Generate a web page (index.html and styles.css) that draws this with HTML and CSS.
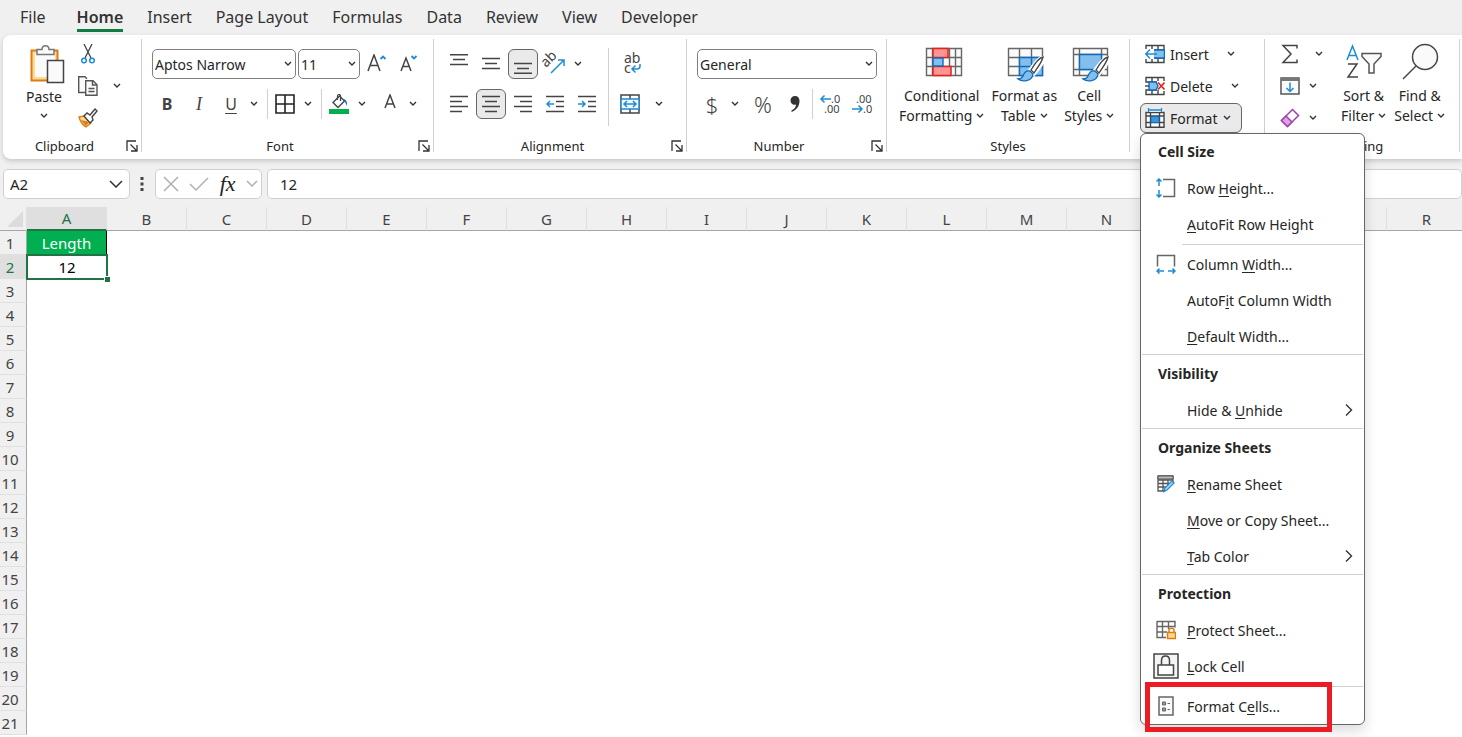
FILE: index.html
```html
<!DOCTYPE html>
<html lang="en">
<head>
  <meta charset="UTF-8">
  <title>Spreadsheet - Format Cells</title>
  <meta name="viewport" content="width=device-width, initial-scale=1.0">
  <link rel="stylesheet" href="styles.css">
</head>
<body>
  <svg class="symbols" aria-hidden="true">
    <symbol id="chev" viewBox="0 0 8 6"><path d="M1 1l3 3 3-3" fill="none" stroke="#333" stroke-width="1.4"/></symbol>
    <symbol id="launch" viewBox="0 0 12 12"><path d="M1 11V1h9M4.500 4.500l6 6M11 5v6H5" fill="none" stroke="#333" stroke-width="1.3"/></symbol>
    <symbol id="brush" viewBox="0 0 30 26">
      <path d="M29 1c-4 1-8 6-13 13l3 3C24 11 28 6 29 1z" fill="#fff" stroke="#fff" stroke-width="5"/>
      <path d="M28 1c-4 1-8 6-12 13l3 3C23 11 27 6 28 1z" fill="#fff" stroke="#444" stroke-width="1.300"/>
      <path d="M15 15c-4-1-6 2-7 5-1 2-3 3-5 3 4 3 14 3 15-5z" fill="#83beec" stroke="#0f6cbd" stroke-width="1.300"/>
    </symbol>
  </svg>

  <nav class="tabs">
    <a href="#">File</a>
    <a href="#" class="active">Home</a>
    <a href="#">Insert</a>
    <a href="#">Page Layout</a>
    <a href="#">Formulas</a>
    <a href="#">Data</a>
    <a href="#">Review</a>
    <a href="#">View</a>
    <a href="#">Developer</a>
  </nav>

  <div class="ribbon">
    <section class="group clipboard">
      <div class="group-body">
        <button class="big">
          <svg width="36" height="40" viewBox="0 0 36 40">
            <path d="M2.500 6.500h26v30h-26z" fill="#fbdc95" stroke="#e07b13" stroke-width="2"/>
            <path d="M6 9h20v24H6z" fill="#fafafa"/>
            <path d="M8 10.500V5.500h5c0-5 7-5 7 0h5v5z" fill="#fafafa" stroke="#777" stroke-width="1.500"/>
            <path d="M18.500 16.500h16v22h-16z" fill="#fafafa" stroke="#444" stroke-width="1.500"/>
          </svg>
          <span>Paste</span>
          <svg class="chev"><use href="#chev"/></svg>
        </button>
        <div class="stack">
          <div class="row">
            <button class="btn" aria-label="Cut">
              <svg width="14" height="20" viewBox="0 0 14 20"><path d="M3 0l7 14M11 0L4 14" fill="none" stroke="#444" stroke-width="1.300"/><circle cx="3" cy="16.500" r="2.300" fill="none" stroke="#1e8bd4" stroke-width="1.500"/><circle cx="11" cy="16.500" r="2.300" fill="none" stroke="#1e8bd4" stroke-width="1.500"/></svg>
            </button>
          </div>
          <div class="row">
            <button class="btn" aria-label="Copy">
              <svg width="20" height="20" viewBox="0 0 20 20" fill="#fafafa" stroke="#555" stroke-width="1.400"><path d="M7 16.500H.700V.700H7l2 2"/><path d="M7.700 4.700H15l4 4v10.500H7.700z"/><path d="M14.500 5v4H19M10.500 12.500h6M10.500 15.500h6" fill="none"/></svg>
            </button>
            <button class="arrow arrow-wide" aria-label="Copy options"><svg class="chev"><use href="#chev"/></svg></button>
          </div>
          <div class="row">
            <button class="btn" aria-label="Format Painter">
              <svg width="20" height="20" viewBox="0 0 20 20"><path d="M1 9l5-1 7 7-5 4c-3-2-6-6-7-10z" fill="#fbdc95" stroke="#e07b13" stroke-width="1.400"/><path d="M3 12l8 2-3 4z" fill="#e07b13"/><path d="M6 8l3-3 3 2 5-6 2 2-5 6 1 3-3 3z" fill="#fff" stroke="#444" stroke-width="1.400"/></svg>
            </button>
          </div>
        </div>
      </div>
      <div class="caption"><span>Clipboard</span><button aria-label="Clipboard settings"><svg width="12" height="12"><use href="#launch"/></svg></button></div>
    </section>

    <section class="group font">
      <div class="group-body rows">
        <div class="row">
          <div class="combo combo-font">
            <select aria-label="Font"><option>Aptos Narrow</option></select>
            <svg class="chev"><use href="#chev"/></svg>
          </div>
          <div class="combo combo-size">
            <select aria-label="Font size"><option>11</option></select>
            <svg class="chev"><use href="#chev"/></svg>
          </div>
          <button class="btn" aria-label="Increase font size">
            <svg width="20" height="20" viewBox="0 0 20 20" fill="none" stroke-width="1.500"><path d="M1 17L7 1l6 16M3 11.500h8" stroke="#444"/><path d="M13.500 5L16 2.500 18.500 5" stroke="#1e8bd4" stroke-width="1.800"/></svg>
          </button>
          <button class="btn" aria-label="Decrease font size">
            <svg width="18" height="20" viewBox="0 0 18 20" fill="none" stroke-width="1.500"><path d="M1 17L6 4l5 13M3 12.500h6" stroke="#444"/><path d="M11.500 2L14 4.500 16.500 2" stroke="#1e8bd4" stroke-width="1.800"/></svg>
          </button>
        </div>
        <div class="row">
          <button class="btn letter bold">B</button>
          <button class="btn letter italic">I</button>
          <div class="split">
            <button class="btn letter underline">U</button>
            <button class="arrow" aria-label="Underline options"><svg class="chev"><use href="#chev"/></svg></button>
          </div>
          <span class="sep"></span>
          <div class="split">
            <button class="btn" aria-label="Borders"><svg width="20" height="20" viewBox="0 0 20 20"><path d="M1 1h18v18H1zM10 1v18M1 10h18" fill="none" stroke="#222" stroke-width="1.600"/></svg></button>
            <button class="arrow" aria-label="Border options"><svg class="chev"><use href="#chev"/></svg></button>
          </div>
          <span class="sep"></span>
          <div class="split">
            <button class="btn" aria-label="Fill color">
              <svg width="20" height="20" viewBox="0 0 20 20"><path d="M0 15h20v5H0z" fill="#00b050"/><path d="M4 8.500L10.500 2l5 5-6.500 6.500z" fill="#fff" stroke="#444" stroke-width="1.400"/><path d="M8.500 6V2c0-2 3-2 3 0v5" fill="none" stroke="#444" stroke-width="1.200"/><path d="M14 5c3 0 4.500 3 4 7-1-2-1.500-4-3-5z" fill="#0f6cbd"/></svg>
            </button>
            <button class="arrow" aria-label="Fill options"><svg class="chev"><use href="#chev"/></svg></button>
          </div>
          <div class="split">
            <button class="btn" aria-label="Font color"><svg width="14" height="20" viewBox="0 0 14 20"><path d="M2 14L7 1l5 13M3.500 10h7" fill="none" stroke="#444" stroke-width="1.500"/></svg></button>
            <button class="arrow" aria-label="Font color options"><svg class="chev"><use href="#chev"/></svg></button>
          </div>
        </div>
      </div>
      <div class="caption"><span>Font</span><button aria-label="Font settings"><svg width="12" height="12"><use href="#launch"/></svg></button></div>
    </section>

    <section class="group alignment">
      <div class="group-body side">
        <div class="rows">
          <div class="row">
            <button class="btn" aria-label="Top align"><svg class="lines" viewBox="0 0 18 20"><path d="M0 .700h18M3 5.500h12M0 10.500h18"/></svg></button>
            <button class="btn" aria-label="Middle align"><svg class="lines" viewBox="0 0 18 20"><path d="M0 4.500h18M3 9.500h12M0 14.500h18"/></svg></button>
            <button class="btn pressed" aria-label="Bottom align"><svg class="lines" viewBox="0 0 18 20"><path d="M0 9.500h18M3 14.500h12M0 19.300h18"/></svg></button>
            <div class="split">
              <button class="btn" aria-label="Orientation">
                <svg width="26" height="26" viewBox="0 0 26 26"><text x="4" y="17" transform="rotate(-45 4 17)" class="glyph-text">ab</text><path d="M9 22L22 9M16 9h6v6" fill="none" stroke="#1e8bd4" stroke-width="1.500"/></svg>
              </button>
              <button class="arrow" aria-label="Orientation options"><svg class="chev"><use href="#chev"/></svg></button>
            </div>
          </div>
          <div class="row">
            <button class="btn" aria-label="Align left"><svg class="lines" viewBox="0 0 18 20"><path d="M0 2.500h18M0 7.500h12M0 12.500h18M0 17.500h12"/></svg></button>
            <button class="btn pressed" aria-label="Center"><svg class="lines" viewBox="0 0 18 20"><path d="M0 2.500h18M3 7.500h12M0 12.500h18M3 17.500h12"/></svg></button>
            <button class="btn" aria-label="Align right"><svg class="lines" viewBox="0 0 18 20"><path d="M0 2.500h18M6 7.500h12M0 12.500h18M6 17.500h12"/></svg></button>
            <button class="btn" aria-label="Decrease indent"><svg class="lines" viewBox="0 0 18 20"><path d="M0 2.500h18M10 7.500h8M10 12.500h8M0 17.500h18"/><path d="M8 10H1M4 7l-3 3 3 3" class="blue"/></svg></button>
            <button class="btn" aria-label="Increase indent"><svg class="lines" viewBox="0 0 18 20"><path d="M0 2.500h18M10 7.500h8M10 12.500h8M0 17.500h18"/><path d="M0 10h7M4 7l3 3-3 3" class="blue"/></svg></button>
          </div>
        </div>
        <span class="sep tall"></span>
        <div class="rows">
          <div class="row">
            <button class="btn" aria-label="Wrap text">
              <svg width="24" height="28" viewBox="0 0 24 28"><text x="6" y="13" class="glyph-text">ab</text><text x="6" y="23" class="glyph-text">c</text><path d="M22 14v2c0 2-1 3-3 3h-5M17.500 15.500L14 19l3.500 3.500" fill="none" stroke="#1e8bd4" stroke-width="1.500"/></svg>
            </button>
          </div>
          <div class="row">
            <div class="split">
              <button class="btn" aria-label="Merge and center">
                <svg width="20" height="20" viewBox="0 0 20 20" fill="none" stroke-width="1.500"><path d="M1 1h18v18H1zM10 1v4M10 15v4" stroke="#444"/><path d="M1 5h18v10H1z" fill="#f3f9fe" stroke="#1e8bd4"/><path d="M4 10h12M7 7l-3 3 3 3M13 7l3 3-3 3" stroke="#1e8bd4"/></svg>
              </button>
              <button class="arrow arrow-wide" aria-label="Merge options"><svg class="chev"><use href="#chev"/></svg></button>
            </div>
          </div>
        </div>
      </div>
      <div class="caption"><span>Alignment</span><button aria-label="Alignment settings"><svg width="12" height="12"><use href="#launch"/></svg></button></div>
    </section>

    <section class="group number">
      <div class="group-body rows">
        <div class="row">
          <div class="combo combo-number">
            <select aria-label="Number format"><option>General</option></select>
            <svg class="chev"><use href="#chev"/></svg>
          </div>
        </div>
        <div class="row">
          <div class="split">
            <button class="btn symbol">$</button>
            <button class="arrow" aria-label="Currency options"><svg class="chev"><use href="#chev"/></svg></button>
          </div>
          <button class="btn symbol">%</button>
          <button class="btn" aria-label="Comma style"><svg width="12" height="18" viewBox="0 0 12 18"><path d="M6 1c3 0 4.500 2 4.500 5 0 5-3 9-8 11v-1.500c3-1.500 4.500-3.500 4.500-6C4 10.500 1.500 8.500 1.500 5.500 1.500 3 3.500 1 6 1z" fill="#333"/></svg></button>
          <span class="sep"></span>
          <button class="btn" aria-label="Increase decimal"><svg width="22" height="26" viewBox="0 0 22 26"><text x="12" y="12" class="digits">.0</text><text x="5" y="22" class="digits">.00</text><path d="M12 8H2M5.500 4.500L2 8l3.500 3.500" fill="none" stroke="#1e8bd4" stroke-width="1.500"/></svg></button>
          <button class="btn" aria-label="Decrease decimal"><svg width="22" height="26" viewBox="0 0 22 26"><text x="5" y="12" class="digits">.00</text><text x="12" y="22" class="digits">.0</text><path d="M1 18h10M7.500 14.500L11 18l-3.500 3.500" fill="none" stroke="#1e8bd4" stroke-width="1.500"/></svg></button>
        </div>
      </div>
      <div class="caption"><span>Number</span><button aria-label="Number settings"><svg width="12" height="12"><use href="#launch"/></svg></button></div>
    </section>

    <section class="group styles">
      <div class="group-body">
        <button class="big">
          <svg width="38" height="40" viewBox="0 0 38 40"><path d="M1.500 5.500h35v27h-35zM1.500 14.500h35M1.500 23.500h35M7.500 5v28M24.500 5v28M30.500 5v28" fill="#fafafa" stroke="#666" stroke-width="1.400"/><path d="M8 5.500h15v9H8zM8 23.500h18v9H8z" fill="#ff9494" stroke="#e2231a" stroke-width="1.500"/><path d="M8 15h10v8H8z" fill="#83beec" stroke="#0f6cbd" stroke-width="1.400"/></svg>
          <span>Conditional</span>
          <span>Formatting <svg class="chev"><use href="#chev"/></svg></span>
        </button>
        <button class="big">
          <svg width="38" height="40" viewBox="0 0 38 40"><path d="M1.500 5.500h34v27h-34zM1.500 14.500h34M1.500 23.500h34M12.500 5v28M24.500 5v28" fill="#fafafa" stroke="#666" stroke-width="1.400"/><path d="M12.500 14.500h23v18h-23zM24.500 14v19M12 23.500h23" fill="#83beec" stroke="#0f6cbd" stroke-width="1.400"/><use href="#brush" x="8" y="13" width="30" height="26"/></svg>
          <span>Format as</span>
          <span>Table <svg class="chev"><use href="#chev"/></svg></span>
        </button>
        <button class="big">
          <svg width="38" height="40" viewBox="0 0 38 40"><path d="M1.500 5.500h34v27h-34zM1.500 11.500h34M1.500 26.500h34M7.500 5v28M29.500 5v28" fill="#fafafa" stroke="#666" stroke-width="1.400"/><path d="M7.500 11.500h22v15h-22z" fill="#83beec" stroke="#0f6cbd" stroke-width="1.400"/><use href="#brush" x="8" y="13" width="30" height="26"/></svg>
          <span>Cell</span>
          <span>Styles <svg class="chev"><use href="#chev"/></svg></span>
        </button>
      </div>
      <div class="caption"><span>Styles</span></div>
    </section>

    <section class="group cells">
      <div class="group-body">
        <div class="stack">
          <div class="row">
            <button class="text-btn">
              <svg width="20" height="20" viewBox="0 0 20 20"><path d="M1 1.500h18v17H1zM7 1v5M13 1v5M7 14v5M13 14v5M1 6h18M1 14h18" fill="#fff" stroke="#444" stroke-width="1.400"/><path d="M8 6h11.500v8H8z" fill="#83beec" stroke="#0f6cbd" stroke-width="1.400"/><path d="M0 5h9v10H0z" fill="#fff"/><path d="M12 10H1M5 5.500L.800 10 5 14.500" fill="none" stroke="#1e8bd4" stroke-width="1.500"/></svg>
              Insert
            </button>
            <button class="arrow" aria-label="Insert options"><svg class="chev"><use href="#chev"/></svg></button>
          </div>
          <div class="row">
            <button class="text-btn">
              <svg width="20" height="20" viewBox="0 0 20 20"><path d="M19 5V1.500H1V6h11M12 14H1v4.500h18V15M7 1v5M13 1v4M7 14v5M13 14v5" fill="none" stroke="#444" stroke-width="1.400"/><path d="M4 6h7l2 4-2 4H4z" fill="#83beec" stroke="#0f6cbd" stroke-width="1.400"/><path d="M0 10h4" stroke="#444" stroke-width="1.400"/><path d="M13 6.500l6.500 7M19.500 6.500l-6.500 7" stroke="#e2231a" stroke-width="1.600"/></svg>
              Delete
            </button>
            <button class="arrow" aria-label="Delete options"><svg class="chev"><use href="#chev"/></svg></button>
          </div>
          <div class="row menu-anchor">
            <button class="text-btn pressed" aria-expanded="true">
              <svg width="20" height="20" viewBox="0 0 20 20"><path d="M1 4.500h18v14.800H1zM5.500 4v15M14.500 4v15M1 8h18M1 14.500h18" fill="#fff" stroke="#444" stroke-width="1.400"/><path d="M6 8.500h8v6H6z" fill="#3a96dd" stroke="#0f6cbd"/><path d="M2 0h16v4H2z" fill="#eaeaea"/><path d="M3.500 2h13M3.500 0v4M16.500 0v4" stroke="#1e8bd4" stroke-width="1.300"/></svg>
              Format <svg class="chev"><use href="#chev"/></svg>
            </button>

            <div class="menu" role="menu">
              <h3>Cell Size</h3>
              <button role="menuitem"><span class="menu-icon"><svg width="20" height="20" viewBox="0 0 20 20" fill="none" stroke-width="1.500"><path d="M7 1.500h11.500v17H7" stroke="#666"/><path d="M3 1v7M3 12v7M.500 3.500L3 1l2.500 2.500M.500 16.500L3 19l2.500-2.500" stroke="#1e8bd4"/></svg></span><span>Row <u>H</u>eight...</span></button>
              <button role="menuitem"><span class="menu-icon"></span><span><u>A</u>utoFit Row Height</span></button>
              <hr class="indent">
              <button role="menuitem"><span class="menu-icon"><svg width="20" height="20" viewBox="0 0 20 20" fill="none" stroke-width="1.500"><path d="M1.500 12.500V1.500h17v11" stroke="#666"/><path d="M1 17h7M12 17h7M3.500 14.500L1 17l2.500 2.500M16.500 14.500L19 17l-2.500 2.500" stroke="#1e8bd4"/></svg></span><span>Column <u>W</u>idth...</span></button>
              <button role="menuitem"><span class="menu-icon"></span><span>AutoF<u>i</u>t Column Width</span></button>
              <button role="menuitem"><span class="menu-icon"></span><span><u>D</u>efault Width...</span></button>
              <hr>
              <h3>Visibility</h3>
              <button role="menuitem"><span class="menu-icon"></span><span>Hide &amp; <u>U</u>nhide</span><svg class="more" viewBox="0 0 8 12"><path d="M1 .500L6.500 6 1 11.500"/></svg></button>
              <hr>
              <h3>Organize Sheets</h3>
              <button role="menuitem"><span class="menu-icon"><svg width="18" height="18" viewBox="0 0 18 18"><path d="M8 16H1V1h15v6M1 5h15M1 8.500h12M1 12h9M6 5v11M11 5v6" fill="none" stroke="#555" stroke-width="1.300"/><path d="M1 1h15v3H1z" fill="#bbb" stroke="#555"/><path d="M7 16.500l1-3.500 7-7 2 2-7 7z" fill="#b9dcf5" stroke="#1e8bd4" stroke-width="1.300"/></svg></span><span><u>R</u>ename Sheet</span></button>
              <button role="menuitem"><span class="menu-icon"></span><span><u>M</u>ove or Copy Sheet...</span></button>
              <button role="menuitem"><span class="menu-icon"></span><span><u>T</u>ab Color</span><svg class="more" viewBox="0 0 8 12"><path d="M1 .500L6.500 6 1 11.500"/></svg></button>
              <hr>
              <h3>Protection</h3>
              <button role="menuitem"><span class="menu-icon"><svg width="20" height="20" viewBox="0 0 20 20"><path d="M1 1.500h18v6M1 1v16.500h9M1 6.500h18M1 12h10M6.500 1v16M12.500 1v8" fill="none" stroke="#666" stroke-width="1.400"/><path d="M13 12.500V10c0-2.500 5-2.500 5 0v2.500" fill="#fff" stroke="#e07b13" stroke-width="1.500"/><path d="M11.500 12.500h8v6h-8z" fill="#fbdc95" stroke="#e07b13" stroke-width="1.500"/></svg></span><span><u>P</u>rotect Sheet...</span></button>
              <button role="menuitem"><span class="menu-icon"><svg width="26" height="26" viewBox="0 0 26 26" stroke="#444" stroke-width="1.500"><path d="M1 1h24v24H1z" fill="#f4f4f4"/><path d="M8.500 12V7.500c0-6 8-6 8 0V12" fill="none"/><path d="M5 12h15.500v10H5z" fill="#fff"/></svg></span><span><u>L</u>ock Cell</span></button>
              <hr class="indent">
              <button role="menuitem" class="highlighted"><span class="menu-icon"><svg width="16" height="20" viewBox="0 0 16 20"><path d="M1 1h14v18H1z" fill="#fafafa" stroke="#666" stroke-width="1.500"/><path d="M4.500 6h3v3h-3zM4.500 12h3v3h-3z" fill="#999" stroke="#666"/><path d="M9.500 7.500H12M9.500 13.500H12" stroke="#666"/></svg></span><span>Format C<u>e</u>lls...</span></button>
            </div>
          </div>
        </div>
      </div>
      <div class="caption"></div>
    </section>

    <section class="group editing">
      <div class="group-body">
        <div class="stack">
          <div class="row">
            <button class="btn" aria-label="AutoSum"><svg width="18" height="20" viewBox="0 0 18 20"><path d="M16 4.500V1.500H2l8 8.500-8 8.500h14v-3" fill="none" stroke="#444" stroke-width="1.500"/></svg></button>
            <button class="arrow arrow-wide" aria-label="AutoSum options"><svg class="chev"><use href="#chev"/></svg></button>
          </div>
          <div class="row">
            <button class="btn" aria-label="Fill"><svg width="20" height="18" viewBox="0 0 20 18"><path d="M1 1h18v16H1z" fill="#fafafa" stroke="#555" stroke-width="1.500"/><path d="M1 2.500h18" stroke="#777" stroke-width="3"/><path d="M10 5.500v9M6.500 11l3.500 3.500 3.500-3.500" fill="none" stroke="#1e8bd4" stroke-width="1.500"/></svg></button>
            <button class="arrow" aria-label="Fill options"><svg class="chev"><use href="#chev"/></svg></button>
          </div>
          <div class="row">
            <button class="btn" aria-label="Clear"><svg width="20" height="20" viewBox="0 0 20 20" stroke="#a33fb0" stroke-width="1.500"><path d="M1.500 12.500L12.500 1.500l6 6-11 11z" fill="#fff"/><path d="M1.500 12.500L6 8l6 6-4.500 4.500z" fill="#dfa0e6"/></svg></button>
            <button class="arrow" aria-label="Clear options"><svg class="chev"><use href="#chev"/></svg></button>
          </div>
        </div>
        <button class="big">
          <svg width="38" height="40" viewBox="0 0 38 40" fill="none" stroke-width="1.500"><path d="M2 17L7.500 3 13 17M4 12.500h7" stroke="#1e8bd4"/><path d="M3 21h9L3 34h10" stroke="#444"/><path d="M17 10.500h19v3l-7 7.500v9h-5v-9l-7-7.500z" fill="#fafafa" stroke="#555"/></svg>
          <span>Sort &amp;</span>
          <span>Filter <svg class="chev"><use href="#chev"/></svg></span>
        </button>
        <button class="big">
          <svg width="38" height="40" viewBox="0 0 38 40" stroke="#444" stroke-width="1.500"><circle cx="24" cy="14" r="12.500" fill="#fafafa"/><path d="M15 23L2 36"/></svg>
          <span>Find &amp;</span>
          <span>Select <svg class="chev"><use href="#chev"/></svg></span>
        </button>
      </div>
      <div class="caption"><span>Editing</span></div>
    </section>
  </div>

  <div class="formula-bar">
    <div class="box name-box">
      <input type="text" value="A2" aria-label="Name box">
      <button aria-label="Named ranges"><svg width="14" height="8" viewBox="0 0 14 8"><path d="M1 1l6 6 6-6"/></svg></button>
    </div>
    <svg class="dots" width="4" height="14" viewBox="0 0 4 14"><path d="M.500 0h3v3h-3zM.500 5.500h3v3h-3zM.500 11h3v3h-3z"/></svg>
    <div class="box fx-box">
      <button aria-label="Cancel"><svg width="16" height="16" viewBox="0 0 16 16"><path d="M1 1l14 14M15 1L1 15"/></svg></button>
      <button aria-label="Enter"><svg width="20" height="16" viewBox="0 0 20 16"><path d="M1 8l6 6L19 2"/></svg></button>
      <button class="fx">fx</button>
      <button aria-label="Function list"><svg width="12" height="8" viewBox="0 0 12 8"><path d="M1 1l5 5 5-5"/></svg></button>
    </div>
    <input class="box formula" type="text" value="12" aria-label="Formula bar">
  </div>

  <div class="sheet">
    <table id="grid">
      <thead><tr id="letters"><th class="corner"><svg width="16" height="16" viewBox="0 0 16 16"><path d="M16 0v16H0z" fill="#dcdcdc"/></svg></th></tr></thead>
      <tbody id="rows"></tbody>
    </table>
  </div>

  <script>
    const columns = "ABCDEFGHIJKLMNOPQR".split("");
    const cells = { A1: "Length", A2: "12" };
    const selected = "A2";

    columns.forEach(letter => {
      const th = document.createElement("th");
      th.textContent = letter;
      if (selected[0] === letter) th.className = "current";
      document.getElementById("letters").appendChild(th);
    });

    for (let r = 1; r <= 21; r++) {
      const tr = document.createElement("tr");
      const th = document.createElement("th");
      th.textContent = r;
      if (selected.slice(1) === String(r)) th.className = "current";
      tr.appendChild(th);
      columns.forEach(letter => {
        const td = document.createElement("td");
        td.textContent = cells[letter + r] || "";
        if (letter + r === "A1") td.className = "heading";
        if (letter + r === selected) td.className = "selected";
        tr.appendChild(td);
      });
      document.getElementById("rows").appendChild(tr);
    }
  </script>
</body>
</html>
```
FILE: styles.css
```css
*, *::after { box-sizing: border-box; }

body {
  margin: 0;
  height: 100vh;
  display: flex;
  flex-direction: column;
  overflow: hidden;
  background: #f0f0f0;
  color: #262626;
  font-family: "Noto Sans", "Open Sans", sans-serif;
  font-size: 14px;
}

button, input, select {
  font: inherit;
  color: inherit;
  background: none;
  border: 0;
  padding: 0;
  margin: 0;
}

svg { display: block; flex: none; }
.symbols { position: absolute; width: 0; height: 0; }

/* tabs */
.tabs {
  display: flex;
  gap: 24px;
  height: 35px;
  padding-left: 20px;
  font-size: 16px;
}

.tabs a {
  height: 32px;
  line-height: 34px;
  color: #333;
  text-decoration: none;
  white-space: nowrap;
}

.tabs a:first-child { margin-right: 7px; }

.tabs .active {
  font-weight: 600;
  border-bottom: 3px solid #107c41;
}

/* ribbon */
.ribbon {
  display: flex;
  flex: none;
  height: 124px;
  margin-left: 3px;
  padding: 4px 0 7px;
  background: #fff;
  border-radius: 8px 0 0 8px;
  box-shadow: 0 2px 5px rgba(0, 0, 0, 0.18);
}

.group {
  display: flex;
  flex-direction: column;
  flex: none;
  border-right: 1px solid #d0d0d0;
}

.clipboard { width: 139px; }
.font { width: 292px; }
.alignment { width: 253px; }
.number { width: 200px; }
.styles { width: 243px; }
.cells { width: 135px; }
.editing { width: 195px; }

.group-body {
  display: flex;
  flex: 1;
  padding-left: 10px;
}

.rows {
  display: flex;
  flex-direction: column;
  justify-content: flex-start;
  gap: 10px;
  padding-top: 10px;
}

.side { gap: 6px; }
.side .rows { flex: none; }

.stack {
  display: flex;
  flex-direction: column;
  gap: 2px;
}

.row { display: flex; align-items: center; height: 30px; gap: 2px; }
.stack .row { gap: 0; }
.split { display: flex; }
.split + * { margin-left: 3px; }

.sep { width: 1px; height: 30px; background: #d0d0d0; }
.sep.tall { height: 78px; margin-top: 9px; }

.caption {
  display: flex;
  align-items: center;
  height: 12px;
  font-size: 13px;
  line-height: 12px;
  text-align: center;
}

.caption span { flex: 1; }
.caption button { margin-right: 3px; }

.btn, .arrow {
  display: flex;
  align-items: center;
  justify-content: center;
  width: 30px;
  height: 30px;
}

.arrow { width: 16px; }
.arrow-wide { width: 28px; }
.chev { width: 8px; height: 6px; }

.pressed {
  background: #eaeaea;
  border: 1px solid #666;
  border-radius: 6px;
}

.letter { font-size: 16px; color: #444; }
.bold { font-weight: 700; }
.italic { font-family: "Liberation Serif", serif; font-style: italic; font-size: 18px; }
.underline { text-decoration: underline; text-underline-offset: 3px; }
.symbol { font-size: 22px; font-weight: 300; color: #444; }

.lines { width: 18px; height: 20px; fill: none; stroke: #444; stroke-width: 1.4px; }
.lines .blue { stroke: #1e8bd4; stroke-width: 1.5px; }
.glyph-text { font-size: 14px; fill: #444; }
.digits { font-size: 11px; fill: #444; }

.combo { display: flex; align-items: center; position: relative; height: 30px; }
.combo-font { width: 144px; }
.combo-size { width: 62px; }
.combo-number { width: 180px; }

.combo select {
  width: 100%;
  height: 100%;
  padding-left: 2px;
  appearance: none;
  border: 1px solid #808080;
  border-radius: 5px;
}

.combo .chev { position: absolute; right: 4px; pointer-events: none; }

.big {
  display: flex;
  flex-direction: column;
  align-items: center;
  height: 86px;
  padding-top: 4px;
  line-height: 20px;
  white-space: nowrap;
}

.big > svg:first-child { margin-bottom: 3px; }
.big span { display: flex; align-items: center; gap: 4px; }
.big > .chev { margin-top: 6px; }
.clipboard .big { width: 42px; margin: 0 8px 0 10px; padding-top: 5px; }
.clipboard .big > svg:first-child { margin-left: 5px; }
.styles .group-body { gap: 7px; padding-left: 12px; }
.styles .big > svg:first-child { margin-left: 4px; }
.editing .group-body { gap: 8px; }

.text-btn {
  display: flex;
  align-items: center;
  gap: 5px;
  height: 30px;
  padding: 0 14px 0 5px;
}

.text-btn.pressed { padding: 0 10px 0 4px; }

/* format menu */
.menu-anchor { position: relative; }

.menu {
  position: absolute;
  top: 30px;
  left: 0;
  z-index: 5;
  width: 225px;
  background: #fff;
  border: 1px solid #666;
  border-radius: 6px;
  box-shadow: 0 6px 14px rgba(0, 0, 0, 0.14);
}

.menu h3 {
  height: 36px;
  margin: 0;
  padding-left: 17px;
  font-size: 14px;
  font-weight: 700;
  line-height: 36px;
}

.menu button {
  display: flex;
  align-items: center;
  width: 100%;
  height: 36px;
  padding: 0 11px;
  text-align: left;
}

.menu-icon {
  display: flex;
  justify-content: center;
  width: 28px;
  margin-right: 7px;
}

.menu hr { height: 1px; margin: 0 1px 1px; border: 0; background: #d0d0d0; }
.menu .indent { margin: 2px 1px 1px 41px; }
.menu u { text-underline-offset: 2px; }
.more { width: 8px; height: 12px; margin-left: auto; fill: none; stroke: #333; stroke-width: 1.4px; }

.highlighted { position: relative; }

.highlighted::after {
  content: "";
  position: absolute;
  top: -6px;
  left: 4px;
  width: 187px;
  height: 50px;
  border: 5px solid #ed1c24;
}

/* formula bar */
.formula-bar {
  display: flex;
  align-items: center;
  flex: none;
  height: 48px;
  padding: 2px 0 0 3px;
}

.box {
  display: flex;
  align-items: center;
  height: 30px;
  background: #fff;
  border: 1px solid #d0d0d0;
  border-radius: 5px;
}

.box svg { fill: none; stroke: #b0b0b0; stroke-width: 1.5px; }
.name-box { width: 127px; padding: 0 6px; }
.name-box input { flex: 1; min-width: 0; font-size: 15px; }
.name-box svg { stroke: #333; }
.dots { margin: 0 11px 0 10px; fill: #444; }
.fx-box { width: 107px; margin-right: 5px; padding: 0 3px 0 7px; justify-content: space-between; }
.fx { font: italic 22px "Liberation Serif", serif; color: #222; }
.formula { flex: 1; min-width: 0; padding-left: 12px; font-size: 15px; }

/* sheet */
.sheet { flex: 1; overflow: hidden; background: #fff; }

table {
  width: 1467px;
  table-layout: fixed;
  border-collapse: separate;
  border-spacing: 0;
  font-size: 15px;
  text-align: center;
}

th, td { height: 24px; padding: 0; line-height: 22px; }

th {
  background: #f0f0f0;
  color: #444;
  font-weight: 400;
  border-right: 1px solid #e0e0e0;
  border-bottom: 1px solid #a6a6a6;
}

th:first-child { width: 27px; }
.corner svg { margin-left: 7px; }

tbody th {
  padding-right: 6px;
  border-right-color: #a6a6a6;
  border-bottom-color: #e0e0e0;
}

.current { background: #dfdfdf; color: #217346; }
thead .current { border-bottom: 2px solid #217346; }

.heading { background: #00b050; color: #fff; border-right: 1px solid #000; }

.selected {
  position: relative;
  color: #000;
  outline: 2px solid #217346;
  outline-offset: -1px;
}

.selected::after {
  content: "";
  position: absolute;
  right: -3px;
  bottom: -3px;
  width: 6px;
  height: 6px;
  background: #217346;
  border: 1px solid #fff;
  border-width: 1px 0 0 1px;
}
```
